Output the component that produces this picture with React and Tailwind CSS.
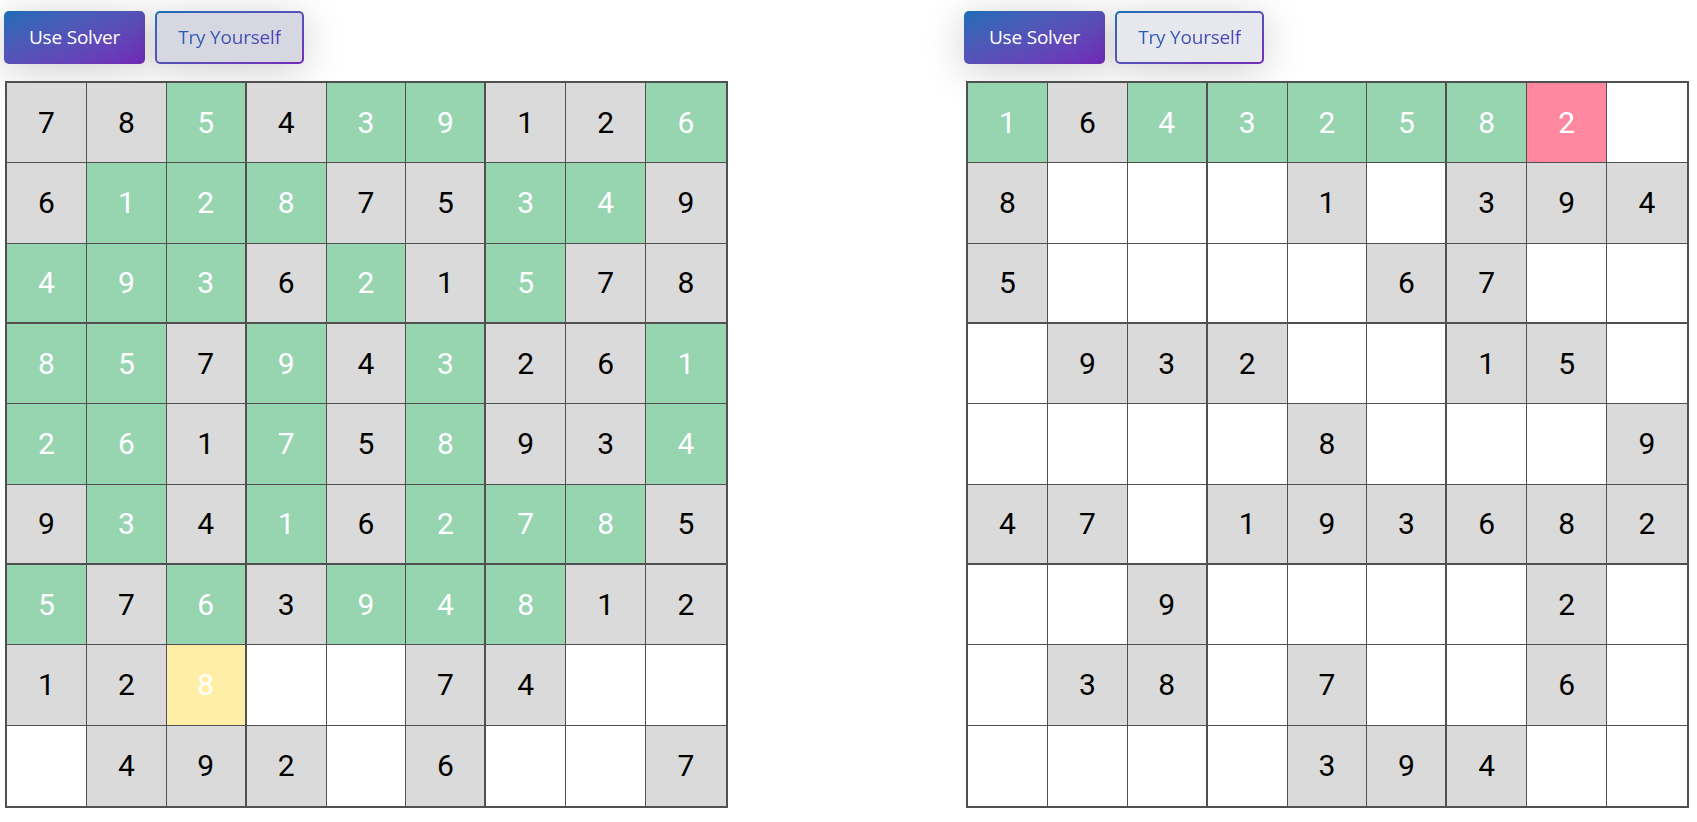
import React from "react";

const LEFT = [
  "7g 8g 5G 4g 3G 9G 1g 2g 6G",
  "6g 1G 2G 8G 7g 5g 3G 4G 9g",
  "4G 9G 3G 6g 2G 1g 5G 7g 8g",
  "8G 5G 7g 9G 4g 3G 2g 6g 1G",
  "2G 6G 1g 7G 5g 8G 9g 3g 4G",
  "9g 3G 4g 1G 6g 2G 7G 8G 5g",
  "5G 7g 6G 3g 9G 4G 8G 1g 2g",
  "1g 2g 8Y _ _ 7g 4g _ _",
  "_ 4g 9g 2g _ 6g _ _ 7g",
];

const RIGHT = [
  "1G 6g 4G 3G 2G 5G 8G 2P _",
  "8g _ _ _ 1g _ 3g 9g 4g",
  "5g _ _ _ _ 6g 7g _ _",
  "_ 9g 3g 2g _ _ 1g 5g _",
  "_ _ _ _ 8g _ _ _ 9g",
  "4g 7g _ 1g 9g 3g 6g 8g 2g",
  "_ _ 9g _ _ _ _ 2g _",
  "_ 3g 8g _ 7g _ _ 6g _",
  "_ _ _ _ 3g 9g 4g _ _",
];

function cellBg(t) {
  if (t === "g") return "bg-[#dadada] text-black";
  if (t === "G") return "bg-[#97d4b0] text-white";
  if (t === "P") return "bg-[#ff87a0] text-white";
  if (t === "Y") return "bg-[#ffefa6] text-white";
  return "bg-white text-black";
}

function Grid({ rows, className }) {
  const cells = [];
  rows.forEach((row, r) => {
    row.split(" ").forEach((tok, c) => {
      const v = tok === "_" ? "" : tok[0];
      const t = tok === "_" ? "" : tok[1];
      const br = c === 8 ? "" : c === 2 || c === 5 ? "border-r-2" : "border-r";
      const bb = r === 8 ? "" : r === 2 || r === 5 ? "border-b-2" : "border-b";
      cells.push(
        <div
          key={r + "-" + c}
          className={`flex items-center justify-center border-[#505050] ${br} ${bb} ${cellBg(t)}`}
        >
          {v}
        </div>
      );
    });
  });
  return (
    <div
      className={`grid grid-cols-9 grid-rows-9 w-[723px] h-[727px] border-2 border-[#505050] text-[30px] leading-none font-['Roboto',sans-serif] ${className}`}
    >
      {cells}
    </div>
  );
}

function Buttons({ tryBg }) {
  return (
    <div className="flex gap-[10px] font-['Open_Sans',sans-serif] text-[19px]">
      <button className="w-[141px] h-[53px] rounded-[5px] bg-linear-to-br from-[#166db6] to-[#7229b9] text-white shadow-[0_6px_40px_rgba(0,0,0,0.2)] tracking-[-0.2px]">
        Use Solver
      </button>
      <div className="w-[149px] h-[53px] rounded-[5px] p-[2px] bg-linear-to-br from-[#166db6] to-[#7229b9] shadow-[0_6px_40px_rgba(0,0,0,0.2)]">
        <div className={`w-full h-full rounded-[3px] ${tryBg} flex items-center justify-center`}>
          <span className="bg-linear-to-r from-[#2460b4] to-[#4e40b6] bg-clip-text text-transparent tracking-[-0.2px]">
            Try Yourself
          </span>
        </div>
      </div>
    </div>
  );
}

export default function App() {
  return (
    <div className="w-[1697px] h-[822px] bg-white flex">
      <div className="ml-[4px] mt-[11px] w-[725px] flex flex-col">
        <Buttons tryBg="bg-[#d6d7e1]" />
        <Grid rows={LEFT} className="mt-[17px] ml-[1px]" />
      </div>
      <div className="ml-[235px] mt-[11px] w-[725px] flex flex-col">
        <Buttons tryBg="bg-[#e7e7ee]" />
        <Grid rows={RIGHT} className="mt-[17px] ml-[2px] w-[722px]" />
      </div>
    </div>
  );
}
